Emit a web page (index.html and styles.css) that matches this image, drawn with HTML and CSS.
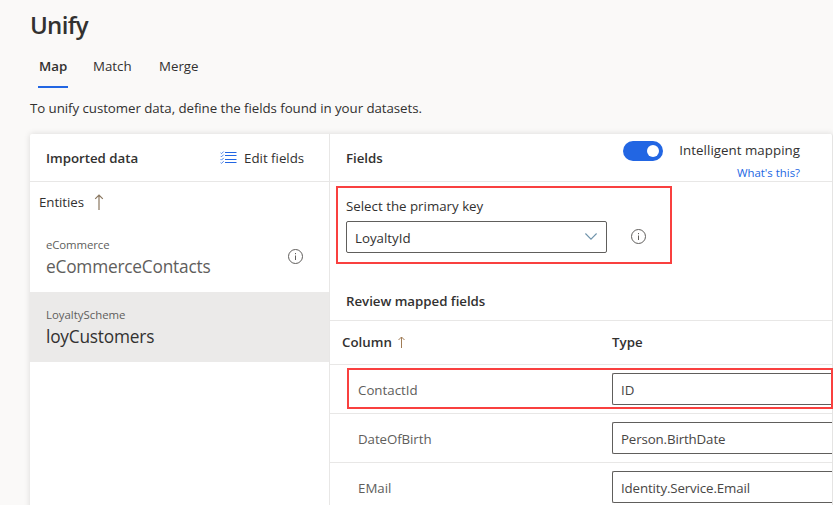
FILE: index.html
```
<!DOCTYPE html>
<html lang="en">
<head>
<meta charset="utf-8">
<title>Unify</title>
<link rel="stylesheet" href="styles.css">
</head>
<body>
<header class="page-head">
  <h1>Unify</h1>
  <nav class="tabs"><a class="tab active">Map</a><a class="tab match">Match</a><a class="tab merge">Merge</a></nav>
  <p class="intro">To unify customer data, define the fields found in your datasets.</p>
</header>
<main class="panel">
  <aside class="entities">
    <div class="bar">
      <h2 class="imported">Imported data</h2>
      <button class="edit">
        <svg width="17" height="13" viewBox="0 0 17 13" fill="none" stroke="#2266e3"><path d="M5 1.5h11.5M5 4.5h11.5M5 8.5h11.5M5 11.5h11.5"/><path stroke-width=".8" d="M.6 1.8l.9.9L3.7.5M.6 4.9l.9.9 2.2-2.2M.6 8.2l.9.9 2.2-2.2M.6 11.5l.9.9 2.2-2.2"/></svg>
        <span>Edit fields</span>
      </button>
    </div>
    <div class="sort"><span>Entities</span>
      <svg width="10" height="17" viewBox="0 0 10 17" fill="none" stroke="#8a7760" stroke-width="1.2"><path d="M5 16V1.2M1.2 4.8L5 1l3.8 3.8"/></svg>
    </div>
    <div class="entity">
      <div><div class="source src-a">eCommerce</div><div class="name name-a">eCommerceContacts</div></div>
      <svg class="info" width="16" height="16" viewBox="0 0 16 16" fill="none" stroke="#605e5c"><circle cx="7.5" cy="7.5" r="7"/><path d="M7.5 6.5V11M7.5 4v1.2"/></svg>
    </div>
    <div class="entity selected">
      <div><div class="source src-b">LoyaltyScheme</div><div class="name name-b">loyCustomers</div></div>
    </div>
  </aside>
  <section class="fields">
    <div class="bar">
      <h2 class="fields-title">Fields</h2>
      <div class="mapping">
        <div class="toggle"><i></i></div>
        <div class="mapping-text"><span class="intel">Intelligent mapping</span><a class="help">What's this?</a></div>
      </div>
    </div>
    <div class="key-area">
      <div class="key">
        <label>Select the primary key</label>
        <div class="key-row">
          <div class="select"><span>LoyaltyId</span><svg class="chevron" width="12" height="7" viewBox="0 0 12 7" fill="none" stroke="#6f93ab" stroke-width="1.1"><path d="M.4.5L6 6.1 11.6.5"/></svg></div>
          <svg width="16" height="16" viewBox="0 0 16 16" fill="none" stroke="#605e5c"><circle cx="7.5" cy="7.5" r="7"/><path d="M7.5 6.5V11M7.5 4v1.2"/></svg>
        </div>
      </div>
    </div>
    <h2 class="review"><span>Review mapped fields</span></h2>
    <div class="row head"><div class="col"><span class="column">Column</span><svg width="8" height="12" viewBox="0 0 8 12" fill="none" stroke="#a07c56"><path d="M3.5 12V1M.5 4L3.5 1l3 3"/></svg></div><div class="type">Type</div></div>
    <div class="row marked"><div class="col contact">ContactId</div><div class="input">ID</div></div>
    <div class="row"><div class="col birth">DateOfBirth</div><div class="input person">Person.BirthDate</div></div>
    <div class="row"><div class="col email">EMail</div><div class="input identity">Identity.Service.Email</div></div>
  </section>
</main>
</body>
</html>
```
FILE: styles.css
```
*, *::after { box-sizing: border-box; }
body { margin: 0; height: 505px; overflow: hidden; background: #faf9f8; color: #323130; font: 13.3px/20px "Open Sans", "Noto Sans", sans-serif; white-space: nowrap; }
h1, h2, p { margin: 0; }
h2 { font-size: 13.3px; font-weight: 600; line-height: 20px; letter-spacing: -.03px; }
svg { flex: none; display: block; }
.page-head { height: 134px; padding: 8px 0 0 30px; }
h1 { font-size: 24px; line-height: 34px; font-weight: 600; letter-spacing: -.7px; }
.tabs { display: flex; height: 46px; padding-left: 8px; }
.tab { height: 46px; padding-top: 14px; }
.tab.active { width: 30px; padding-left: 1px; font-weight: 600; border-bottom: 2px solid #2266e3; }
.match { margin-left: 25px; width: 66px; }
.intro { margin-top: 10px; letter-spacing: -.06px; }
.panel { display: flex; width: 803px; height: 381px; margin-left: 30px; background: #fff; border-right: 1px solid #e5e4e3; border-radius: 2px 2px 0 0; box-shadow: 0 0 6px rgba(0,0,0,.13); }
.entities { width: 300px; border-right: 1px solid #e8e7e6; flex: none; }
.bar { height: 48px; border-bottom: 1px solid #e8e7e6; padding: 0 16px; display: flex; align-items: center; justify-content: space-between; }
.edit { display: flex; align-items: center; gap: 7px; width: 93px; height: 20px; padding: 0; border: 0; background: none; color: inherit; font: inherit; }
.sort { height: 40px; padding-left: 9px; display: flex; align-items: center; gap: 10px; letter-spacing: -.08px; }
.entity { height: 70px; padding: 14px 25px 0 16px; display: flex; justify-content: space-between; color: #605e5c; }
.source { font-size: 11.4px; line-height: 18px; }
.src-a { letter-spacing: -.1px; }
.name { font-size: 17.3px; line-height: 25px; letter-spacing: -.21px; }
.info { margin-top: 13px; }
.selected { background: #ebeae9; }
.name-b { color: #323130; }
.fields { flex: 1; min-width: 0; }
.fields .bar { padding-right: 32px; }
.mapping { display: flex; width: 177px; height: 47px; padding-top: 7px; justify-content: space-between; }
.toggle { width: 40px; height: 20px; border-radius: 10px; background: #2266e3; padding: 4px; display: flex; justify-content: flex-end; }
.toggle i { width: 12px; height: 12px; border-radius: 50%; background: #fff; }
.mapping-text { display: flex; flex-direction: column; align-items: flex-end; }
.intel { line-height: 18px; letter-spacing: .04px; }
.help { color: #2266e3; font-size: 11.4px; line-height: 27px; }
.key-area { height: 100px; padding: 4px 6px; }
.key { width: 336px; height: 78px; border: 2px solid #f9403f; padding: 8px; }
.key-row { display: flex; align-items: center; gap: 24px; margin-top: 5px; }
.select { width: 261px; height: 32px; border: 1px solid #605e5c; border-radius: 2px; padding: 2px 9px 0 8px; display: flex; justify-content: space-between; align-items: center; }
.chevron { margin-top: -3px; }
.review { height: 39px; padding: 9px 16px 0; border-bottom: 1px solid #e8e7e6; }
.row { height: 49px; border-bottom: 1px solid #e8e7e6; padding-left: 28px; display: flex; align-items: center; position: relative; }
.col { width: 254px; color: #605e5c; padding-top: 2px; }
.birth { letter-spacing: -.08px; }
.row.head { height: 44px; padding: 0 0 2px 12px; font-weight: 600; }
.head .col { width: 270px; display: flex; align-items: center; gap: 6px; color: inherit; padding: 0; }
.input { flex: 1; height: 32px; border: 1px solid #605e5c; border-right: 0; border-radius: 2px 0 0 2px; padding: 6px 8px; color: #484644; }
.person, .identity { letter-spacing: -.13px; }
.marked::after { content: ""; position: absolute; left: 17px; top: 3px; right: -1px; height: 41px; border: 2px solid #f9403f; }
```
